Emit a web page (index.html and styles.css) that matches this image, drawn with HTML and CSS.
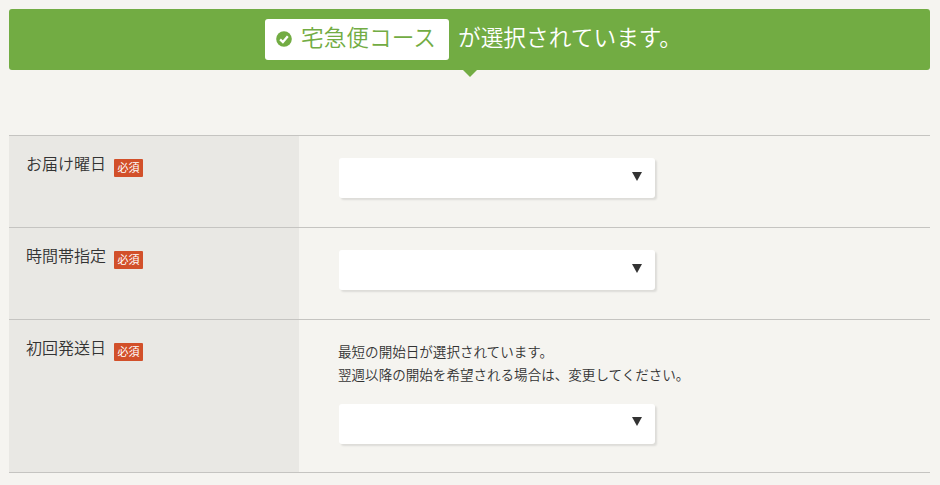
FILE: index.html
```html
<!DOCTYPE html>
<html lang="ja">
<head>
<meta charset="utf-8">
<title>お届け設定</title>
<link rel="stylesheet" href="styles.css">
</head>
<body>
<div class="banner">
  <span class="course">
    <svg class="check" viewBox="0 0 16 16"><circle cx="8" cy="8" r="7.8"/><path d="M4.1 8.3 6.9 11 11.8 5.2"/></svg>
    <span class="course-name">宅急便コース</span>
  </span>
  <span class="message">が選択されています。</span>
</div>
<div class="form">
  <div class="row">
    <div class="label"><span>お届け曜日</span><span class="required">必須</span></div>
    <div class="field">
      <div class="select"><svg class="arrow" viewBox="0 0 10 9"><path d="M0 0h10L5 9z"/></svg></div>
    </div>
  </div>
  <div class="row">
    <div class="label"><span>時間帯指定</span><span class="required">必須</span></div>
    <div class="field">
      <div class="select"><svg class="arrow" viewBox="0 0 10 9"><path d="M0 0h10L5 9z"/></svg></div>
    </div>
  </div>
  <div class="row row-date">
    <div class="label"><span>初回発送日</span><span class="required">必須</span></div>
    <div class="field">
      <p class="note">最短の開始日が選択されています。<br>翌週以降の開始を希望される場合は、変更してください。</p>
      <div class="select"><svg class="arrow" viewBox="0 0 10 9"><path d="M0 0h10L5 9z"/></svg></div>
    </div>
  </div>
</div>
</body>
</html>
```
FILE: styles.css
```css
* {
  box-sizing: border-box;
}

body {
  margin: 0;
  padding: 9px 10px 0 9px;
  background: #f5f4f0;
  color: #333;
  font-family: "Noto Sans CJK JP", sans-serif;
  font-weight: 400;
}

.banner {
  position: relative;
  display: flex;
  height: 61px;
  padding: 10px 0 0 256px;
  border-radius: 3px;
  background: #72ac43;
  color: #fff;
  font-size: 22.7px;
  font-weight: 350;
  line-height: 36px;
  white-space: nowrap;
}

.banner::after {
  content: "";
  position: absolute;
  top: 61px;
  left: 454px;
  border: 7px solid transparent;
  border-top-color: #72ac43;
  border-bottom: 0;
}

.course {
  display: flex;
  width: 184px;
  height: 41px;
  padding-left: 11px;
  border-radius: 3px;
  background: #fff;
  color: #72ac43;
}

.check {
  width: 16px;
  height: 16px;
  margin: 12px 9px 0 0;
  fill: #72ac43;
}

.check path {
  fill: none;
  stroke: #fff;
  stroke-width: 2.3;
}

.message {
  margin-left: 9px;
}

.form {
  margin-top: 65px;
  border-bottom: 1px solid #c5c4c1;
}

.row {
  display: flex;
  height: 92px;
  border-top: 1px solid #c5c4c1;
}

.row-date {
  height: 153px;
}

.label {
  display: flex;
  align-items: flex-start;
  width: 290px;
  padding: 15px 0 0 17px;
  background: #e9e8e4;
  font-size: 16px;
  font-weight: 350;
  line-height: 25px;
}

.required {
  width: 29px;
  height: 18px;
  margin: 8px 0 0 8px;
  border-radius: 1px;
  background: #d2502a;
  color: #fff;
  font-size: 11px;
  font-weight: 400;
  line-height: 17px;
  text-align: center;
}

.field {
  padding: 22px 0 0 40px;
}

.row-date .field {
  padding-top: 20px;
}

.note {
  margin: 0 0 18px -1px;
  font-size: 13.55px;
  font-weight: 350;
  line-height: 23px;
}

.select {
  display: flex;
  justify-content: flex-end;
  width: 316px;
  height: 40px;
  padding: 14px 13px 0 0;
  border-radius: 3px;
  background: #fff;
  box-shadow: 2px 2px 2px rgba(0, 0, 0, 0.1);
}

.row-date .select {
  padding-top: 13px;
}

.arrow {
  width: 10px;
  height: 9px;
  fill: #333;
}
```
